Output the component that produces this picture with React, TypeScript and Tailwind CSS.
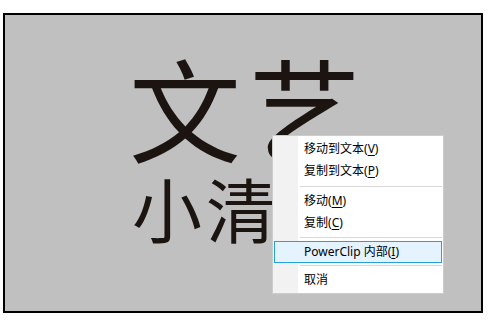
import React from "react";

type Entry =
  | { type: "item"; label: string; hotkey?: string; active?: boolean }
  | { type: "sep"; cls: string };

const ITEMS: Entry[] = [
  { type: "item", label: "移动到文本", hotkey: "V" },
  { type: "item", label: "复制到文本", hotkey: "P" },
  { type: "sep", cls: "mt-[4px] mb-[3px]" },
  { type: "item", label: "移动", hotkey: "M" },
  { type: "item", label: "复制", hotkey: "C" },
  { type: "sep", cls: "mt-[3px] mb-[3px]" },
  { type: "item", label: "PowerClip 内部", hotkey: "I", active: true },
  { type: "sep", cls: "mt-[2px] mb-[3px]" },
  { type: "item", label: "取消" },
];

function MenuItem({ label, hotkey, active }: { label: string; hotkey?: string; active?: boolean }) {
  return (
    <div
      className={`mx-[1px] flex h-[22px] items-center border pl-[29px] text-[12px] leading-none text-black ${
        active ? "border-[#26a0da] bg-[#e5f3ff]" : "border-transparent"
      }`}
    >
      <span>
        {label}
        {hotkey && (
          <>
            (<span className="underline underline-offset-2">{hotkey}</span>)
          </>
        )}
      </span>
    </div>
  );
}

export default function App() {
  return (
    <div className="h-[328px] w-[493px] bg-white pl-[3px] pt-[13px] font-['Noto_Sans','Noto_Sans_CJK_SC',sans-serif]">
      <div className="relative h-[300px] w-[480px] overflow-hidden border-2 border-black bg-[#c0c0c0]">
        {/* canvas text */}
        <div className="flex flex-col pl-[124px] pt-[35px] font-['Noto_Sans_CJK_SC',sans-serif] text-[#1b1411]">
          <div className="text-[112px] leading-none tracking-[8px]">文艺</div>
          <div className="mt-[11px] pl-[3px] text-[70px] leading-none tracking-[4px]">小清</div>
        </div>

        {/* context menu */}
        <div className="absolute left-[267px] top-[120px] w-[172px] border border-[#cccccc] bg-[linear-gradient(to_right,#f2f2f2_25px,#ffffff_25px)] pb-[2px] pt-[2px]">
          {ITEMS.map((it, i) =>
            it.type === "sep" ? (
              <div key={i} className={`ml-[27px] mr-[1px] h-px bg-[#d7d7d7] ${it.cls}`} />
            ) : (
              <MenuItem key={i} label={it.label} hotkey={it.hotkey} active={it.active} />
            ),
          )}
        </div>
      </div>
    </div>
  );
}
